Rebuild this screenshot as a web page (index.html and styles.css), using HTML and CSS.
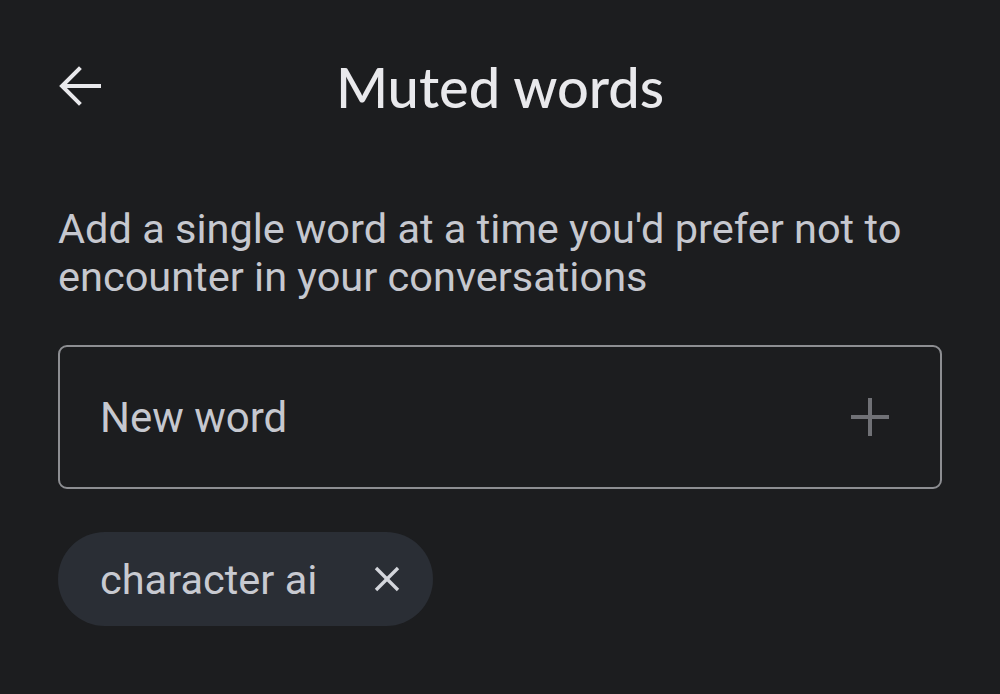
FILE: index.html
```html
<!DOCTYPE html>
<html>
<head>
  <link rel="stylesheet" href="styles.css">
</head>
<body>
  <div class="screen">
    <div class="top-bar">
      <button class="back-btn" aria-label="Back">
        <svg width="44" height="44" viewBox="0 0 44 44" fill="none" stroke="#e9e9ec" stroke-width="4" stroke-linecap="square">
          <path d="M41 22H6"/>
          <path d="M21 5L4 22L21 39"/>
        </svg>
      </button>
      <h1>Muted words</h1>
    </div>

    <p class="hint">Add a single word at a time you'd prefer not to encounter in your conversations</p>

    <div class="word-input">
      <span class="placeholder">New word</span>
      <svg class="add-icon" width="40" height="40" viewBox="0 0 40 40" stroke="#707176" stroke-width="4">
        <path d="M20 1V39"/>
        <path d="M1 20H39"/>
      </svg>
    </div>

    <div class="chips">
      <div class="chip">
        <span>character ai</span>
        <svg width="26" height="26" viewBox="0 0 26 26" stroke="#d4d6dc" stroke-width="3.4">
          <path d="M2 2L24 24"/>
          <path d="M24 2L2 24"/>
        </svg>
      </div>
    </div>
  </div>
</body>
</html>
```

FILE: styles.css
```css
body {
  margin: 0;
  background: #1c1d1f;
  font-family: 'Roboto', 'Liberation Sans', sans-serif;
}

.screen {
  width: 1000px;
  height: 694px;
  padding: 0 58px;
  box-sizing: border-box;
  overflow: hidden;
}

.top-bar {
  display: flex;
  align-items: center;
  height: 172px;
}

.back-btn {
  background: none;
  border: none;
  padding: 0;
  margin-top: -1px;
  width: 44px;
  height: 44px;
  cursor: pointer;
}

.top-bar h1 {
  flex: 1;
  margin: 0 0 0 -44px;
  text-align: center;
  color: #e9e9ec;
  font-family: 'Lato', 'Inter', sans-serif;
  font-weight: 500;
  font-size: 56px;
}

.hint {
  margin: 33px 0 0;
  color: #c6c8cf;
  font-size: 41.5px;
  line-height: 48px;
}

.word-input {
  margin-top: 44px;
  height: 144px;
  border: 2px solid #8d8e92;
  border-radius: 9px;
  box-sizing: border-box;
  display: flex;
  align-items: center;
  justify-content: space-between;
  padding: 0 50px 0 40px;
}

.placeholder {
  color: #c6c8cf;
  font-size: 42px;
}

.chips {
  margin-top: 43px;
  display: flex;
}

.chip {
  display: flex;
  align-items: center;
  gap: 57px;
  height: 94px;
  padding: 0 33px 0 42px;
  background: #2a2e35;
  border-radius: 47px;
  color: #c8cad1;
  font-size: 41.5px;
}
```
